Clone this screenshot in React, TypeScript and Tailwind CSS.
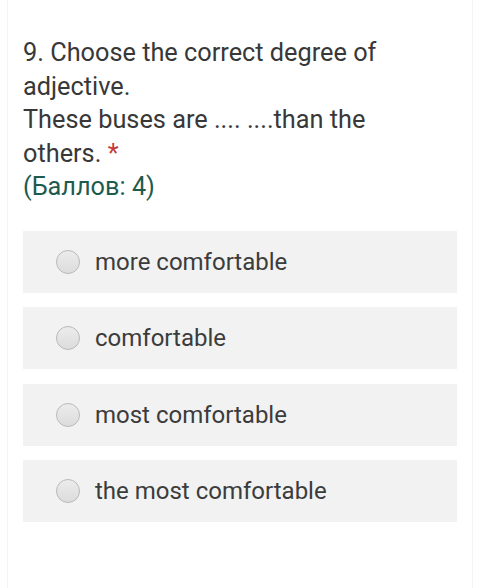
import React from "react";

const options = ["more comfortable", "comfortable", "most comfortable", "the most comfortable"];

export default function App() {
  return (
    <div
      className="w-[480px] h-[588px] bg-white flex px-[7px]"
      style={{ fontFamily: "Roboto, 'Liberation Sans', sans-serif" }}
    >
      <div className="flex-1 border-x border-[#f3f3f3] pt-[36px] pl-[15px] pr-[15px]">
        <div className="text-[25.3px] leading-[33.5px] text-[#383838]">
          <div>9. Choose the correct degree of</div>
          <div>adjective.</div>
          <div>These buses are .... ....than the</div>
          <div>
            others. <span className="text-[#c43b3b]">*</span>
          </div>
          <div className="text-[#1e5b4e]">(Баллов: 4)</div>
        </div>
        <div className="mt-[27px] flex flex-col gap-[14.5px]">
          {options.map((o) => (
            <div key={o} className="h-[62px] bg-[#f2f2f2] flex items-center pl-[33px]">
              <div className="w-[24px] h-[24px] rounded-full border-[1.5px] border-[#b9b9b9] bg-gradient-to-b from-[#ececec] to-[#dcdcdc]" />
              <span className="ml-[15px] text-[24px] text-[#3c3c3c]">{o}</span>
            </div>
          ))}
        </div>
      </div>
    </div>
  );
}
